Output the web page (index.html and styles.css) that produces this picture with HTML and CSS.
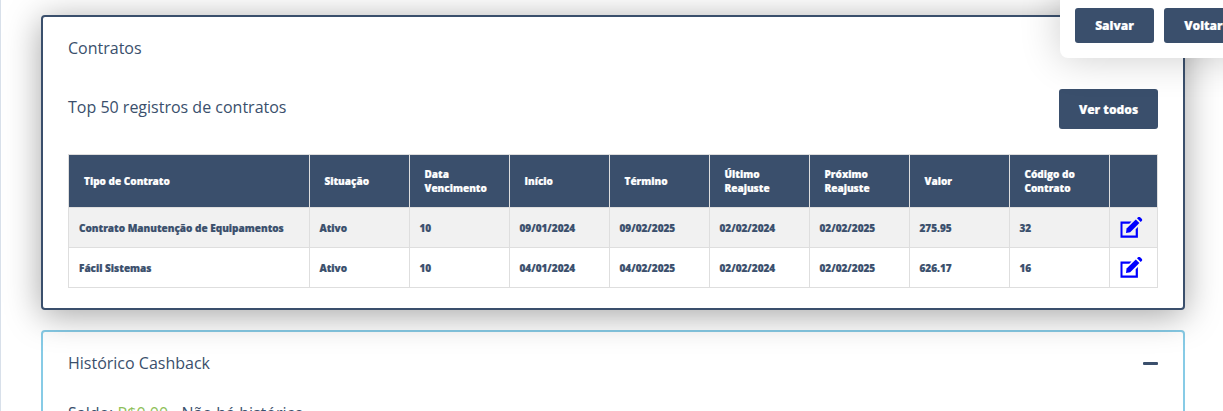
FILE: index.html
```html
<!DOCTYPE html>
<html lang="pt">
<head>
<meta charset="utf-8">
<title>Contratos</title>
<link rel="stylesheet" href="styles.css">
</head>
<body>
<div class="page">
  <section class="card card-dark">
    <h2 class="card-title">Contratos</h2>
    <div class="subhead">
      <h3 class="subtitle">Top 50 registros de contratos</h3>
      <a class="btn btn-all">Ver todos</a>
    </div>
    <table class="grid">
      <colgroup>
        <col class="c1"><col class="c2"><col class="c3"><col class="c3"><col class="c3"><col class="c3"><col class="c3"><col class="c3"><col class="c3"><col class="c4">
      </colgroup>
      <thead>
        <tr>
          <th>Tipo de Contrato</th><th>Situação</th><th>Data Vencimento</th><th>Início</th><th>Término</th><th>Último Reajuste</th><th>Próximo Reajuste</th><th>Valor</th><th>Código do Contrato</th><th></th>
        </tr>
      </thead>
      <tbody>
        <tr class="odd">
          <td>Contrato Manutenção de Equipamentos</td><td>Ativo</td><td>10</td><td>09/01/2024</td><td>09/02/2025</td><td>02/02/2024</td><td>02/02/2025</td><td>275.95</td><td>32</td>
          <td class="act"><svg class="edit" viewBox="0 0 24 22"><path d="M1.5 4.5h11l-2.2 2.2H3.5v11.8h13.2v-6.3l2.2-2.2v10.7H1.5z"/><path d="M7.6 11.6 16.8 2.5l3.6 3.6-9.2 9.2-4.2.7z"/><path d="M18 1.3l1-1a1.6 1.6 0 0 1 2.2 0l1.5 1.5a1.6 1.6 0 0 1 0 2.2l-1 1z"/></svg></td>
        </tr>
        <tr>
          <td>Fácil Sistemas</td><td>Ativo</td><td>10</td><td>04/01/2024</td><td>04/02/2025</td><td>02/02/2024</td><td>02/02/2025</td><td>626.17</td><td>16</td>
          <td class="act"><svg class="edit" viewBox="0 0 24 22"><path d="M1.5 4.5h11l-2.2 2.2H3.5v11.8h13.2v-6.3l2.2-2.2v10.7H1.5z"/><path d="M7.6 11.6 16.8 2.5l3.6 3.6-9.2 9.2-4.2.7z"/><path d="M18 1.3l1-1a1.6 1.6 0 0 1 2.2 0l1.5 1.5a1.6 1.6 0 0 1 0 2.2l-1 1z"/></svg></td>
        </tr>
      </tbody>
    </table>
  </section>
  <section class="card card-light">
    <div class="head-row">
      <h2 class="card-title">Histórico Cashback</h2>
      <span class="collapse"></span>
    </div>
    <p class="balance">Saldo: <span class="money">R$0,00</span> - Não há histórico</p>
  </section>
</div>
<div class="float-bar">
  <a class="btn btn-float">Salvar</a>
  <a class="btn btn-float">Voltar</a>
</div>
</body>
</html>
```
FILE: styles.css
```css
* { box-sizing: border-box; }
html, body { margin: 0; height: 100%; overflow: hidden; }
body {
  background: #fff;
  font-family: "Open Sans", "Noto Sans", sans-serif;
  color: #3a4f6c;
  border-left: 1px solid #d8e0ea;
}
.page { padding: 15px 38px 0 40px; }
.card {
  background: #fff;
  border-radius: 4px;
  border: 2px solid #3a4f6c;
  padding: 19px 25px 20px;
}
.card-dark {
  position: relative;
  z-index: 1;
  height: 295px;
  box-shadow: 0 5px 35px rgba(0, 0, 0, .36);
}
.card-light {
  margin-top: 20px;
  border-color: #87cbe6;
  height: 120px;
}
.card-title { margin: 0; font-size: 16px; line-height: 24px; font-weight: 400; }
.subhead {
  display: flex;
  justify-content: space-between;
  align-items: flex-start;
  margin-top: 29px;
}
.subtitle { margin: 0; font-size: 16px; line-height: 24px; font-weight: 400; padding-top: 6px; }
.btn {
  display: flex;
  align-items: center;
  justify-content: center;
  background: #3a4f6c;
  color: #fff;
  border-radius: 3px;
  font-size: 12px;
  font-weight: 800;
  -webkit-text-stroke: .2px #fff;
}
.btn-all { width: 99px; height: 40px; }
.grid {
  margin-top: 25px;
  width: 1088.5px;
  table-layout: fixed;
  border-collapse: collapse;
  font-size: 10px;
  font-weight: 800;
}
.c1 { width: 240.5px; }
.c2 { width: 100px; }
.c3 { width: 100px; }
.c4 { width: 48px; }
.grid th, .grid td { border: 1px solid #dedede; }
.grid th {
  background: #3a4f6c;
  color: #fff;
  height: 53px;
  padding: 0 15px;
  text-align: left;
  font-size: 10px;
  line-height: 14px;
  font-weight: 800;
  -webkit-text-stroke: .2px #fff;
}
.grid td { height: 40px; padding: 0 10px; -webkit-text-stroke: .2px #3a4f6c; }
.grid .odd td { background: #f1f1f1; }
.grid .act { padding: 0; text-align: center; }
.edit { display: block; width: 24px; height: 22px; margin: 0 auto 0 9px; fill: #0000ff; }
.head-row { display: flex; justify-content: space-between; align-items: center; }
.collapse { width: 15px; height: 3px; background: #3a4f6c; border-radius: 1px; }
.balance { margin: 26px 0 0; font-size: 16px; line-height: 24px; }
.money { color: #8fbf5a; }
.float-bar {
  position: absolute;
  z-index: 2;
  top: -10px;
  left: 1060px;
  width: 200px;
  height: 68px;
  padding: 18px 15px 0;
  display: flex;
  gap: 10px;
  background: #fff;
  border-radius: 8px;
  box-shadow: 0 0 40px rgba(0, 0, 0, .2);
}
.btn-float { width: 79px; height: 35px; flex: none; }
```
